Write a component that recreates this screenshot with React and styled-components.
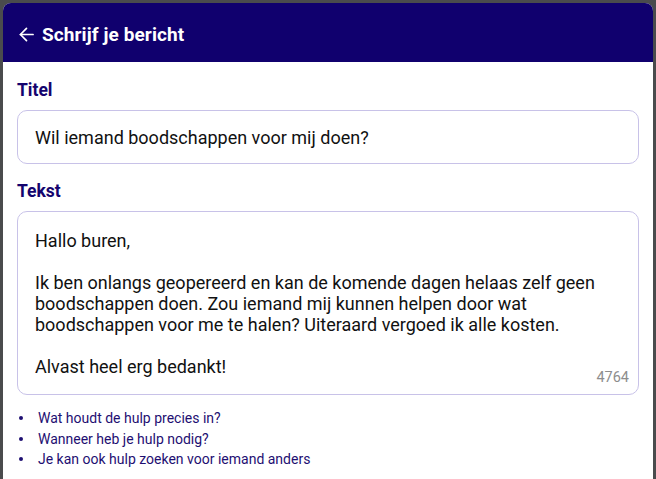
import styled, { createGlobalStyle } from 'styled-components'

const GlobalStyle = createGlobalStyle`
  html, body {
    margin: 0;
    padding: 0;
    background: #4a4b4d;
    font-family: Roboto, "Noto Sans", sans-serif;
  }
  * { box-sizing: border-box; }
`

const message = `Hallo buren,

Ik ben onlangs geopereerd en kan de komende dagen helaas zelf geen
boodschappen doen. Zou iemand mij kunnen helpen door wat
boodschappen voor me te halen? Uiteraard vergoed ik alle kosten.

Alvast heel erg bedankt!`

const tips = [
  'Wat houdt de hulp precies in?',
  'Wanneer heb je hulp nodig?',
  'Je kan ook hulp zoeken voor iemand anders',
]

function App() {
  return (
    <>
      <GlobalStyle />
      <Sheet>
        <Header>
          <BackButton aria-label="Terug">
            <svg width="15" height="15" viewBox="0 0 16 16" fill="none" stroke="white" strokeWidth="1.8" strokeLinecap="round" strokeLinejoin="round">
              <path d="M15 8H1.5" />
              <path d="M8 1.5L1.5 8 8 14.5" />
            </svg>
          </BackButton>
          <Title>Schrijf je bericht</Title>
        </Header>
        <Content>
          <Label>Titel</Label>
          <Field>Wil iemand boodschappen voor mij doen?</Field>
          <Label $spaced>Tekst</Label>
          <TextBox>
            <Body>{message}</Body>
            <Counter>4764</Counter>
          </TextBox>
          <Tips>
            {tips.map((t) => (
              <Tip key={t}>{t}</Tip>
            ))}
          </Tips>
        </Content>
      </Sheet>
    </>
  )
}

export default App

const Sheet = styled.div`
  margin: 3px 3px 0 3px;
  min-height: 476px;
  background: #fff;
  border-radius: 8px 8px 0 0;
  overflow: hidden;
`

const Header = styled.header`
  height: 59px;
  background: #10006e;
  display: flex;
  align-items: center;
  gap: 7px;
  padding: 4px 0 0 15px;
`

const BackButton = styled.button`
  background: none;
  border: 0;
  padding: 0;
  width: 17px;
  height: 17px;
  display: flex;
  align-items: center;
  justify-content: center;
`

const Title = styled.h1`
  margin: 0;
  color: #fff;
  font-size: 19px;
  font-weight: 700;
  letter-spacing: 0.1px;
`

const Content = styled.main`
  padding: 18px 14px 0 14px;
  display: flex;
  flex-direction: column;
`

const Label = styled.label`
  color: #14046e;
  font-size: 17.5px;
  font-weight: 700;
  line-height: 20px;
  margin-top: ${(p) => (p.$spaced ? '17px' : '0')};
  margin-bottom: 10px;
`

const Field = styled.div`
  height: 54px;
  border: 1px solid #c8c2e8;
  border-radius: 10px;
  display: flex;
  align-items: center;
  padding: 0 17px;
  font-size: 18px;
  color: #111;
`

const TextBox = styled.div`
  position: relative;
  height: 184px;
  border: 1px solid #c8c2e8;
  border-radius: 10px;
  padding: 18px 17px 0 17px;
`

const Body = styled.div`
  white-space: pre;
  font-size: 18px;
  line-height: 21px;
  color: #111;
`

const Counter = styled.span`
  position: absolute;
  right: 9px;
  bottom: 8px;
  font-size: 14.5px;
  color: #8d8d8d;
`

const Tips = styled.ul`
  list-style: none;
  margin: 13px 0 0 0;
  padding: 0;
`

const Tip = styled.li`
  display: flex;
  align-items: center;
  gap: 15px;
  padding-left: 2px;
  color: #1e0f72;
  font-size: 14px;
  line-height: 20.5px;

  &::before {
    content: '';
    width: 4px;
    height: 4px;
    border-radius: 50%;
    background: #1e0f72;
    flex-shrink: 0;
  }
`
